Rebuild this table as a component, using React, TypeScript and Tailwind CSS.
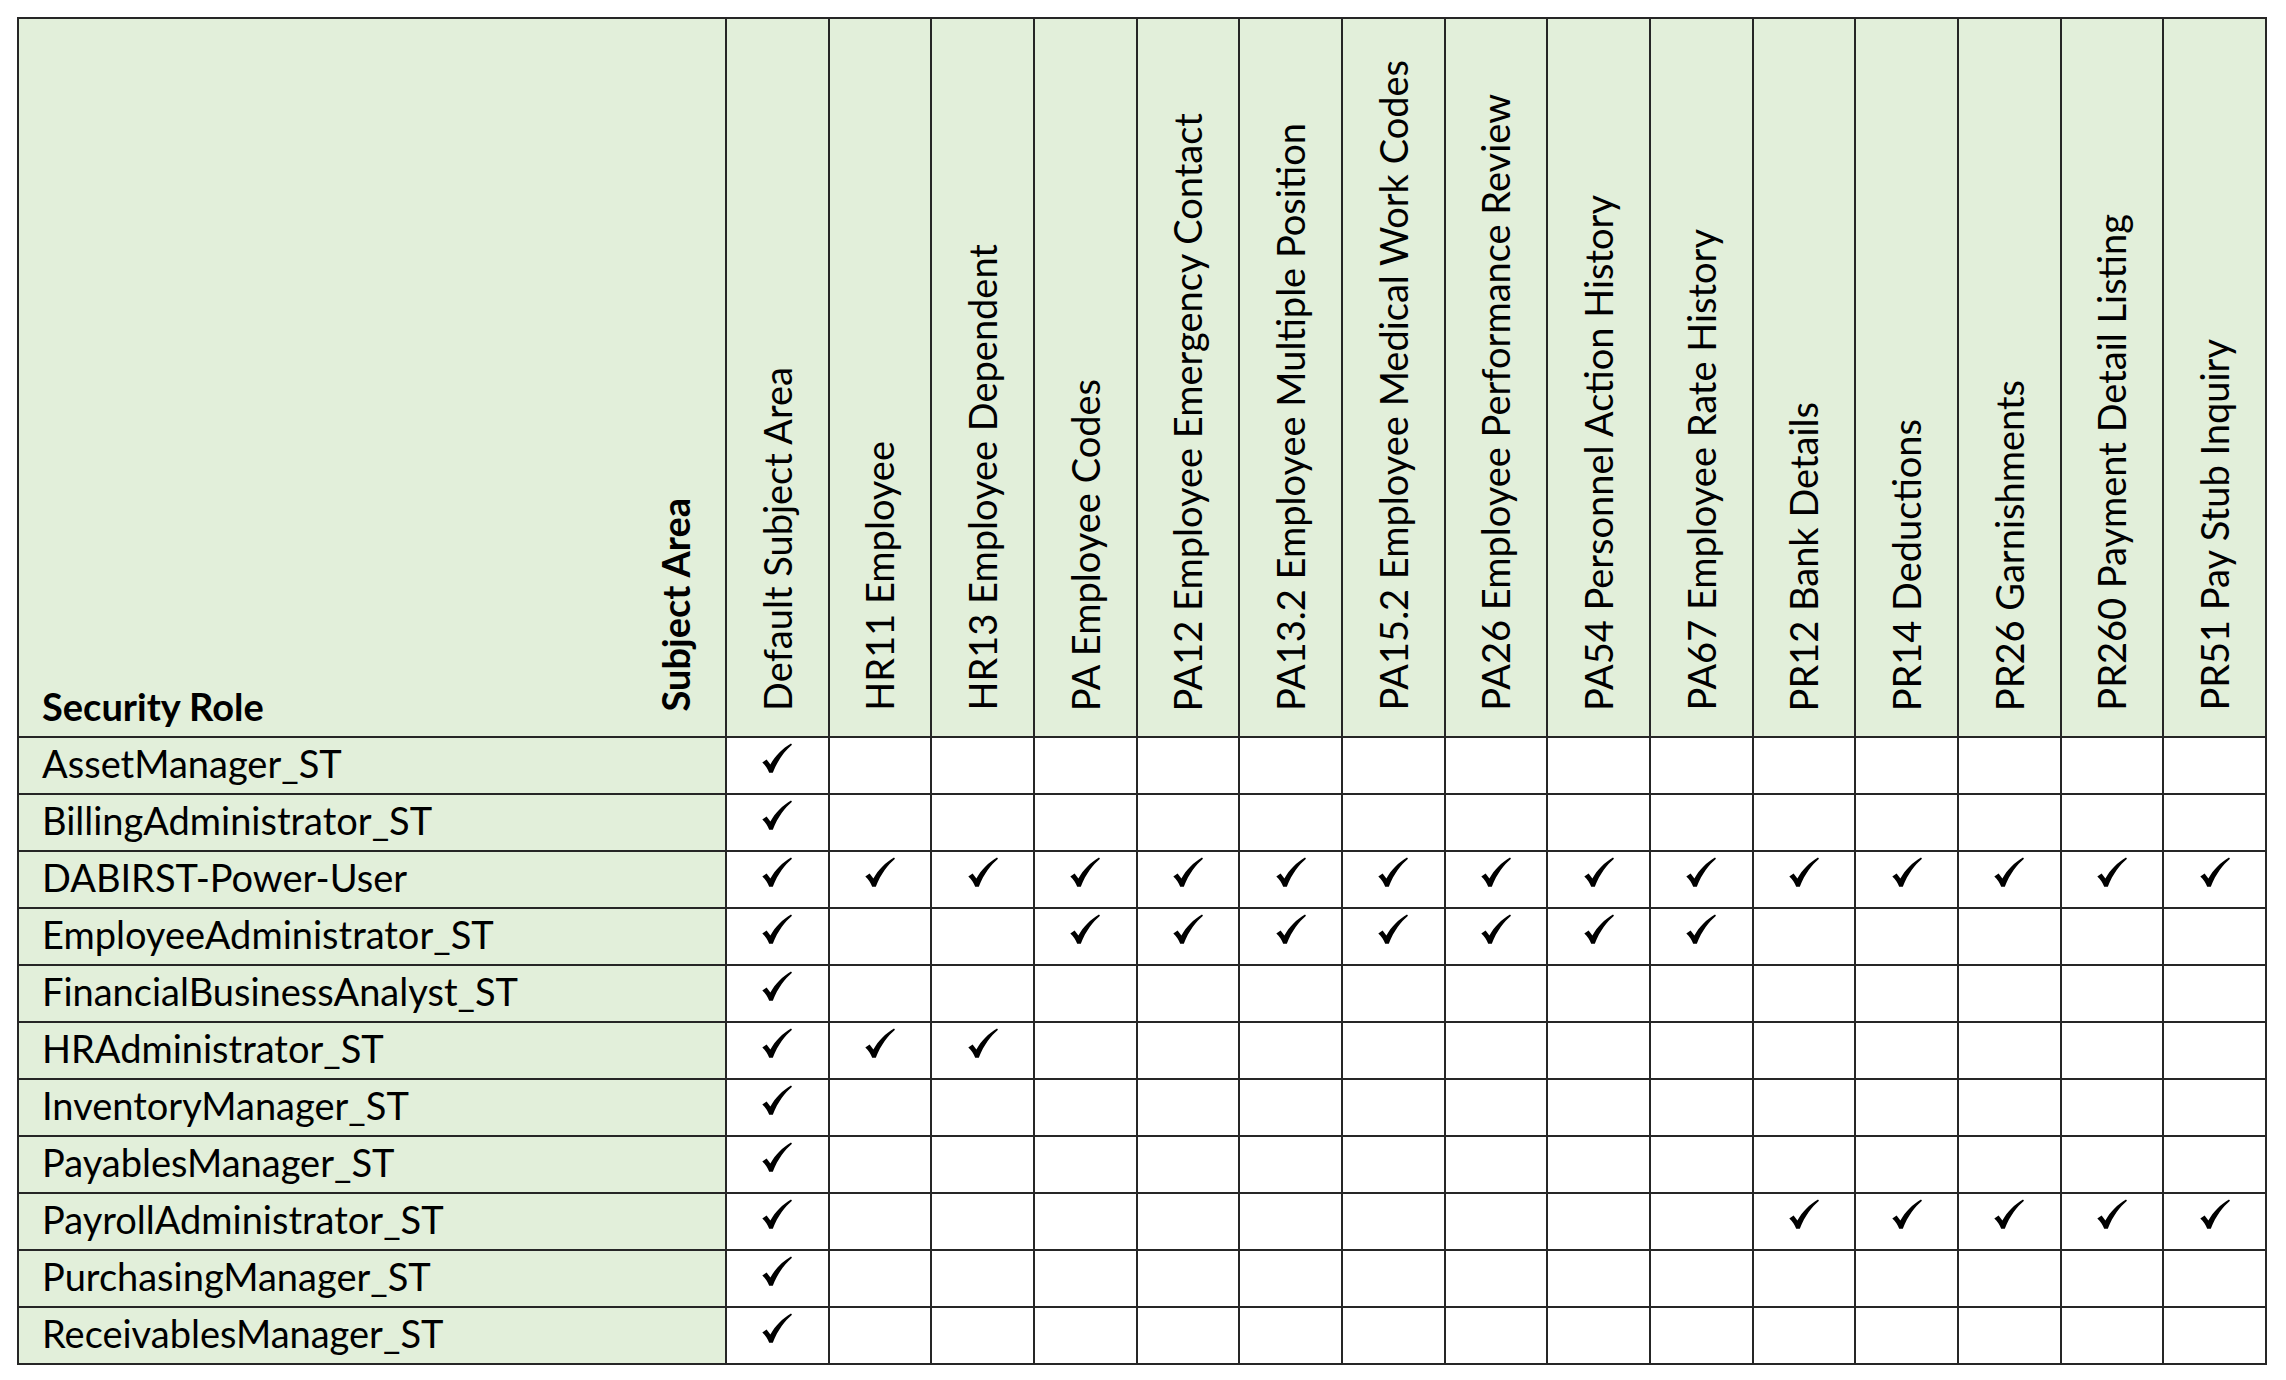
import React from "react";

const columns = [
  "Default Subject Area",
  "HR11 Employee",
  "HR13 Employee Dependent",
  "PA Employee Codes",
  "PA12 Employee Emergency Contact",
  "PA13.2 Employee Multiple Position",
  "PA15.2 Employee Medical Work Codes",
  "PA26 Employee Performance Review",
  "PA54 Personnel Action History",
  "PA67 Employee Rate History",
  "PR12 Bank Details",
  "PR14 Deductions",
  "PR26 Garnishments",
  "PR260 Payment Detail Listing",
  "PR51 Pay Stub Inquiry",
];

const all = Array.from({ length: 15 }, (_, i) => i);

const rows: { name: string; checks: number[] }[] = [
  { name: "AssetManager_ST", checks: [0] },
  { name: "BillingAdministrator_ST", checks: [0] },
  { name: "DABIRST-Power-User", checks: all },
  { name: "EmployeeAdministrator_ST", checks: [0, 3, 4, 5, 6, 7, 8, 9] },
  { name: "FinancialBusinessAnalyst_ST", checks: [0] },
  { name: "HRAdministrator_ST", checks: [0, 1, 2] },
  { name: "InventoryManager_ST", checks: [0] },
  { name: "PayablesManager_ST", checks: [0] },
  { name: "PayrollAdministrator_ST", checks: [0, 10, 11, 12, 13, 14] },
  { name: "PurchasingManager_ST", checks: [0] },
  { name: "ReceivablesManager_ST", checks: [0] },
];

function Check() {
  return (
    <svg width="30" height="30" viewBox="0 0 30 30" aria-hidden="true">
      <path
        d="M0.3 19.4 L4.6 16.4 L8.4 21.4 C13 13 20.5 5.2 29 0.4 L30 1.8 C23 7.8 16 16.5 10.8 29.8 L7.2 29.8 C5.8 25.8 3.4 22.2 0.3 19.4 Z"
        fill="#000"
      />
    </svg>
  );
}

export default function App() {
  return (
    <div
      className="min-h-screen bg-white p-[17px] text-black"
      style={{ fontFamily: "Lato, 'Open Sans', sans-serif" }}
    >
      <div className="grid w-[2250px] grid-cols-[706px_repeat(15,minmax(0,1fr))] grid-rows-[717px_repeat(11,55px)] gap-[2px] bg-[#262626] p-[2px]">
        {/* Header first cell */}
        <div className="flex items-end justify-between bg-[#e2efda] pl-[23px]">
          <span className="mb-[6px] text-[38px] font-bold leading-[1.2]">Security Role</span>
          <span className="mb-[25px] mr-[26px] rotate-180 text-[38px] font-bold leading-[1.2] whitespace-nowrap [writing-mode:vertical-rl]">
            Subject Area
          </span>
        </div>
        {columns.map((c) => (
          <div key={c} className="flex items-end justify-center bg-[#e2efda] pb-[25px]">
            <span className="rotate-180 text-[38px] leading-[1.2] whitespace-nowrap [writing-mode:vertical-rl]">
              {c}
            </span>
          </div>
        ))}
        {rows.map((r) => (
          <React.Fragment key={r.name}>
            <div className="flex items-start bg-[#e2efda] pl-[23px] pt-[3px]">
              <span className="text-[38px] leading-[1.2] whitespace-nowrap">{r.name}</span>
            </div>
            {columns.map((c, i) => (
              <div key={c} className="flex justify-center bg-white pt-[5px]">
                {r.checks.includes(i) ? <Check /> : null}
              </div>
            ))}
          </React.Fragment>
        ))}
      </div>
    </div>
  );
}
